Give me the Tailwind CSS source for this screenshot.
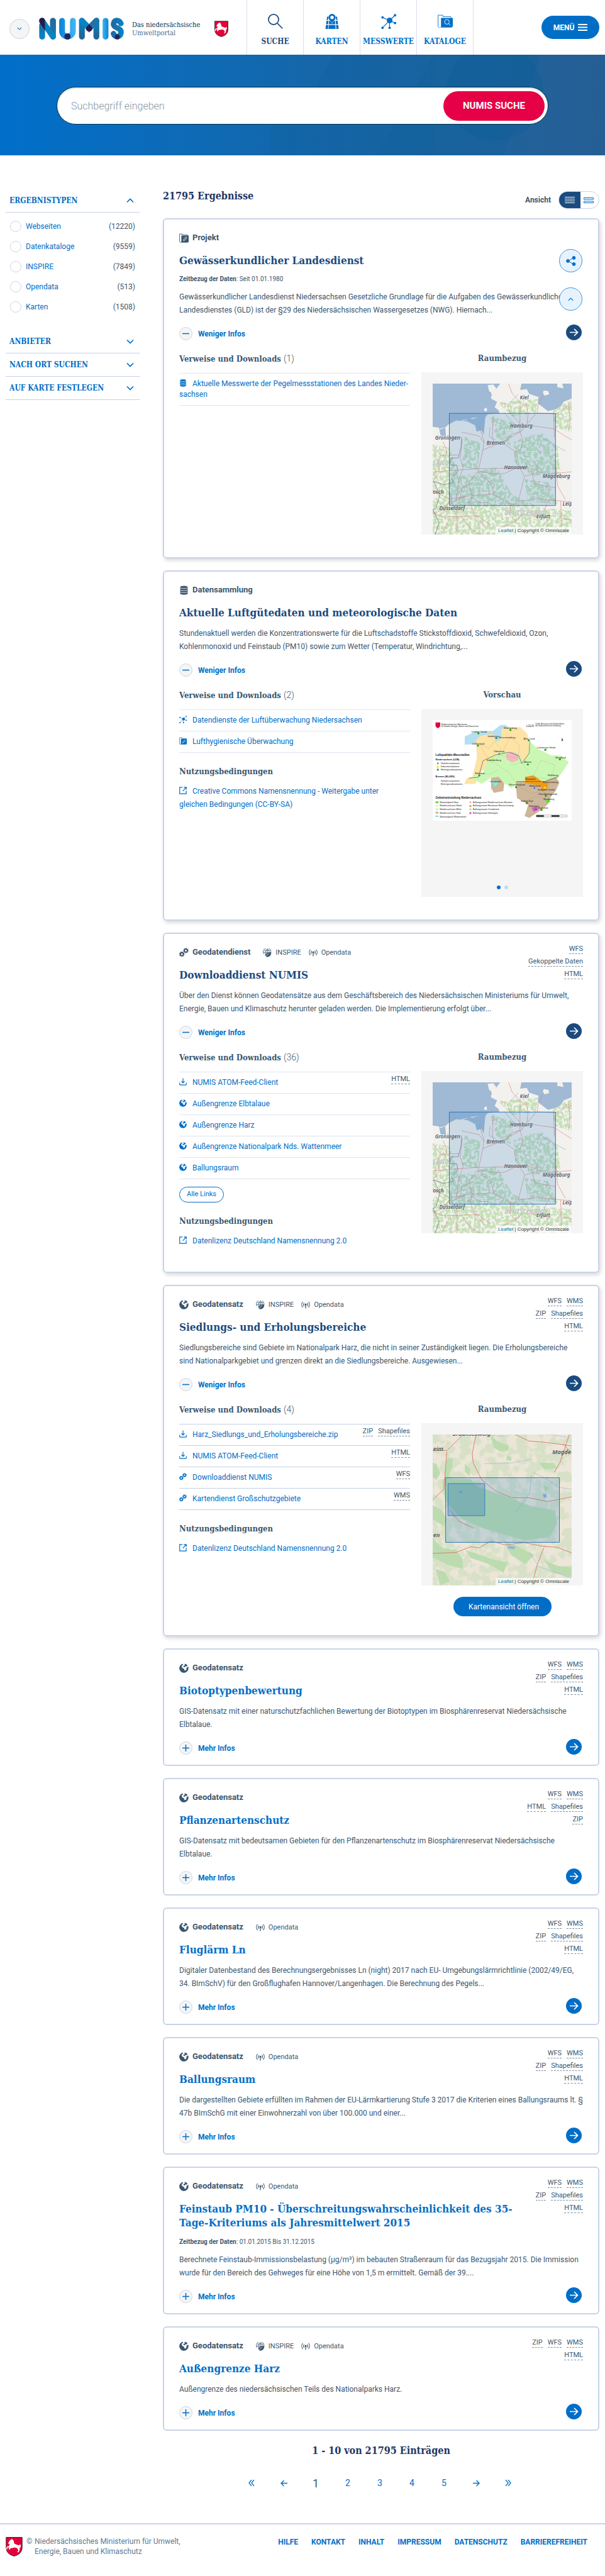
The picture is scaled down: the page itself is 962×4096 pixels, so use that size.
<!DOCTYPE html>
<html lang="de">
<head>
<meta charset="utf-8">
<meta name="viewport" content="width=device-width, initial-scale=1">
<title>NUMIS – Suche</title>
<script src="https://cdn.jsdelivr.net/npm/@tailwindcss/browser@4"></script>
</head>
<body class="bg-white text-[#3b576f] text-[12px] [font-family:Roboto,sans-serif] [&_.slab]:[font-family:'Roboto_Slab','DejaVu_Serif_Condensed','DejaVu_Serif',serif]">

<svg class="absolute size-0" aria-hidden="true">
  <defs>
    <linearGradient id="g2" gradientUnits="userSpaceOnUse" x1="375" y1="0" x2="480" y2="0"><stop offset="0" stop-color="#0584da"/><stop offset="1" stop-color="#45b8f0"/></linearGradient>
    <linearGradient id="g3" gradientUnits="userSpaceOnUse" x1="0" y1="60" x2="0" y2="190"><stop offset="0" stop-color="#0088cc"/><stop offset="1" stop-color="#28608f"/></linearGradient>
    <linearGradient id="g4" gradientUnits="userSpaceOnUse" x1="0" y1="60" x2="0" y2="190"><stop offset="0" stop-color="#28608f"/><stop offset="1" stop-color="#0088cc"/></linearGradient>
    <linearGradient id="g5" gradientUnits="userSpaceOnUse" x1="702" y1="0" x2="786" y2="0"><stop offset="0" stop-color="#28649a"/><stop offset="1" stop-color="#0088cc"/></linearGradient>
    <linearGradient id="g6" gradientUnits="userSpaceOnUse" x1="651" y1="0" x2="688" y2="0"><stop offset="0" stop-color="#3fb4ee"/><stop offset="1" stop-color="#0584da"/></linearGradient>
    <filter id="wood" x="0" y="0" width="1" height="1" color-interpolation-filters="sRGB"><feTurbulence type="fractalNoise" baseFrequency=".05" numOctaves="3" seed="4"/><feColorMatrix result="n" values="0 0 0 0 0  0 0 0 0 0  0 0 0 0 0  9 0 0 0 -3.8"/><feComposite in="SourceGraphic" in2="n" operator="in"/></filter>
  </defs>

  <symbol id="i-crest" viewBox="0 0 30 35">
    <path d="M.7.7h28.6v18C29.300 27 24 32 15 34.300 6 32 .7 27 .7 18.700z" fill="#e4003a" stroke="#1c1118" stroke-width="1"/>
    <path d="M11 3.500l2 1.500 1.500 3 .500 3.500 4 2 4.500 1.500 2.500-2 1 2.500-1 5-1.500-2.500.500 5-2 4.500-2.500-.500 2-3-2-4-5-1.500-3.500 1.500-3-.500-1.500 3-2.500-1 1.500-3-3.500.500-.500 3.500-1.500-.500.500-4.500 4.500-1.500L7 12l-2.500.500.500-3 2.500-3.500z" fill="#fff"/>
  </symbol>
  <symbol id="i-globe" viewBox="0 0 20 20">
    <path fill-rule="evenodd" d="M8 .5A9.700 9.700 0 1 0 18.900 6.500l-1.400 1.300-2.300 1.400.2 3.300-2 2.600-2.400-.3-.6-3.600-2.700-.8-2.600-3 .6-3L8.300 3l-.6-1z" fill="currentColor"/><path d="M11 .5l4 1.200 2.600 2.600-2 2-2.600-.2-1.200 2-2.600-.4-.6-2L12 4z" fill="currentColor"/>
  </symbol>
  <symbol id="i-gears" viewBox="0 0 20 20">
    <g fill="none" stroke="currentColor"><circle cx="5.500" cy="13.500" r="3.200" stroke-width="2.400"/><circle cx="5.500" cy="13.500" r="4.700" stroke-width="1.800" stroke-dasharray="2.100 1.590"/><circle cx="14" cy="6" r="3.200" stroke-width="2.400"/><circle cx="14" cy="6" r="4.700" stroke-width="1.800" stroke-dasharray="2.100 1.590"/></g>
  </symbol>
  <symbol id="i-db" viewBox="0 0 20 20">
    <path d="M2 3.500C2 1.500 5.500.5 10 .5s8 1 8 3v13c0 2-3.500 3-8 3s-8-1-8-3z" fill="currentColor"/><path d="M2 4.500c2 2.200 14 2.200 16 0M2 9c2 2.200 14 2.200 16 0M2 13.500c2 2.200 14 2.200 16 0" fill="none" stroke="#fff" stroke-width="1.100"/>
  </symbol>
  <symbol id="i-folder" viewBox="0 0 20 20">
    <path d="M.8 1.500h6v2h11v2" fill="none" stroke="currentColor" stroke-width="1.200"/><path d="M.8 1.500V17a2 2 0 0 0 2 2" fill="none" stroke="currentColor" stroke-width="1.200"/><path d="M4.500 4.500H20V17a2.500 2.500 0 0 1-2.500 2.500H2.500q2-.3 2-2.500z" fill="currentColor"/><path d="M9 15.500l.6-2.600 4.600-5.200 2 1.800-4.600 5.200z" fill="none" stroke="#fff" stroke-width="1.100"/>
  </symbol>
  <symbol id="i-download" viewBox="0 0 20 20"><path d="M10 1v11.500M5.500 8.500L10 13l4.500-4.500M1.200 12.500v4.700c0 .8.500 1.300 1.300 1.300h15c.8 0 1.300-.5 1.300-1.300v-4.700" fill="none" stroke="currentColor" stroke-width="2"/></symbol>
  <symbol id="i-extern" viewBox="0 0 20 20"><path d="M8.500 1.500H1.200v17h17.300v-8M12 1.300h6.700v6.400M18.500 1.500L9.500 11.500" fill="none" stroke="currentColor" stroke-width="2"/></symbol>
  <symbol id="i-net" viewBox="0 0 32 32"><g fill="currentColor"><circle cx="18" cy="14" r="6"/><circle cx="29.500" cy="3" r="2.600"/><circle cx="3" cy="7.500" r="2.600"/><circle cx="29.500" cy="19.500" r="2.600"/><circle cx="18" cy="29.500" r="2.600"/><circle cx="3" cy="29.500" r="2.600"/></g><path d="M18 14L29.500 3M18 14L3 7.500M18 14l11.500 5.500M18 14v15M18 14L3 29.500" stroke="currentColor" stroke-width="1.500"/></symbol>
  <symbol id="i-open" viewBox="0 0 20 20"><g fill="none" stroke="currentColor" stroke-width="1.600"><path d="M3.500 2.500a10 10 0 0 0 0 13M16.500 2.500a10 10 0 0 1 0 13M6.500 5.500a5.500 5.500 0 0 0 0 7M13.500 5.500a5.500 5.500 0 0 1 0 7"/></g><circle cx="10" cy="9" r="2.100" fill="currentColor"/><path d="M9.100 9h1.800v9H9.100z" fill="currentColor"/></symbol>
  <symbol id="i-inspire" viewBox="0 0 20 20"><g fill="none" stroke="currentColor" stroke-width="1.100"><path d="M2 13A9 9 0 1 1 18.500 8M1 9h17M3 4.500h14M10 1C5 5 5 10 6 14M10 1c3 2 4 4 4.500 7M10 1v10"/></g><path d="M6 13c2-3 7-4 13-4.500C19 15 16 19.500 9 19.500 6.500 19 5 17 6 13z" fill="currentColor"/><path d="M7 18c2-3 4-4.500 7-6" stroke="#fff" stroke-width="1" fill="none"/></symbol>
  <symbol id="i-arrow" viewBox="0 0 25 25"><circle cx="12.500" cy="12.500" r="12.500" fill="currentColor"/><path d="M6 12.500h12M13 7l5.500 5.500L13 18" fill="none" stroke="#fff" stroke-width="1.700"/></symbol>
  <symbol id="i-down" viewBox="0 0 12 8"><path d="M1 1.500l5 5 5-5" fill="none" stroke="currentColor" stroke-width="1.700"/></symbol>

  <symbol id="map-nds" viewBox="15 12 885 960" preserveAspectRatio="none">
    <path d="M0 0h920v1000H0z" fill="#f3f1ed"/>
    <g fill="#c5e0b8" filter="url(#wood)">
      <path d="M15 400l110 20 60 200-50 130L15 700zM120 620L420 540 520 720 700 800 900 820V972H15V760zM530 380l170-60 110 100 20 160-180 20-110-90zM600 620l150 20 60 140-190-20zM380 220l150 40-20 150-90-60zM430 130l260-20-20 90-150 20zM780 170l120-50v200l-110-30zM220 350l100 40-20 170-100-20z"/>
    </g>
    <path d="M15 12h430l-30 40-35-10 10 40 40 15-45 10 40 20-15 35 25 20 5 20-75 5-15 20-10 110-15-30-30 10-10-40-50-25-70-5-50 25-20 20 5 55-35-5-10-50-40-5-70 15z" fill="#a0b9d4"/>
    <path d="M580 12l-8 40 42-5 15 30 60 20-5 40 65 50 55-15 30-20 15-25 51-20V12h-60l8 30-40-8V12z" fill="#a0b9d4"/>
    <g fill="#f3f1ed"><path d="M365 22l35-5 20 25-10 30-35-10zM390 85l35-3 20 15-30 12-30-4zM722 55l30 5 5 20-30 8-10-18zM340 175l18-12 4 22-14 4z"/><path d="M60 298l50-12-50 18zM125 272l60-16-55 20zM200 245l45-8-42 14zM258 232l50-6-45 13z"/></g>
    <g fill="none" stroke="#d98580" stroke-width="2.600">
      <path d="M498 12l22 60 52 60-2 180M450 135l35 5 25 60 60 65M610 135l12 70-6 60-40 55M715 90l-30 70-5 40 125 5 70-55 25 10M620 265l50-60M570 315l20 60-15 55-40 20 10 60 55 90-40 160M575 315l-60 20-45 60 65 45M650 280l140 20 60 40 50 30M575 318l-90 50-85 40-65 25-30 135 110 20 60-5 80-40M400 215l-5 140 15 40-50 10M200 320l110 25 30 40-5 50M310 280l20 60 15 50M205 365l-15 120 20 60-30 80-15 140M15 575l110-10 170-12 340-5 100 40 165-15M300 572l-55 70 20 80-5 40M300 572l85 70 20 80M250 650l-50 30-10 60M130 745l120-20 150-10 100 60 45 5M565 760l110-15 225 20M260 735l60 35 50 0M150 760l70-30M130 760l40 60 0 152M170 820l80-60 30 80 70 90M15 690l110 60-30 60-80 30M510 790l-2 60 60 60M600 845l140 20 10 50-80 57M750 760l-25 60M830 760l5 210M835 870l65 10M650 590l15 60 135 25M680 530v50l-75 20M800 540l10 120 50 90M880 140l10 110-10 60M785 205l5 150M15 830l60 30 230-6 80 60M410 945l120-50 60-50M15 400l50 70 115-5M80 380l25 60-10 40M15 640l40-60V470M130 860l-60 112M200 860l60 80 60 32"/>
    </g>
    <g fill="none" stroke="#96b6da" stroke-width="3"><path d="M470 195l50 60 70 55M690 340l80 50 90 50M380 290l-5 60 40 20M120 690l15 60 30 110M500 140l60-60M780 570l60 50"/></g>
    <g fill="none" stroke="#777a82" stroke-width="3"><path d="M198 350l-2 60-18 75h-50v45h40l8 40-40 40 10 30-60 15-65-20 40 80-25 90-20 10 40 80-25 77"/></g>
    <path d="M121 201h676v586H121z" fill="#3380c8" fill-opacity=".2" stroke="#2a75ba" stroke-width="4"/>
    <g font-family="Noto Sans, sans-serif" font-style="italic" font-weight="600" fill="#525b68" font-size="33" stroke="#ffffff" stroke-opacity=".35" stroke-width="3" paint-order="stroke">
      <text x="570" y="112">Kiel</text><text x="508" y="293">Hamburg</text><text x="30" y="369">Groningen</text><text x="357" y="399">Bremen</text><text x="470" y="558">Hannover</text><text x="715" y="614">Magdeburg</text><text x="16" y="711">osch</text><text x="57" y="816">Düsseldorf</text><text x="842" y="788">Leip</text><text x="675" y="868">Erfurt</text>
      <text x="17" y="532" fill="#bfc1c3" font-size="40">LAND</text><text x="472" y="848" fill="#bfc1c3" font-size="40">DEUTSCHLAND</text>
    </g>
  </symbol>
</svg>

<header class="flex h-[87px] items-stretch">
  <div class="flex w-[392px] shrink-0 items-center pt-1 pl-[15px]">
    <button aria-label="Portale anzeigen" class="flex size-8 items-center justify-center rounded-full border border-[#c9d2e6] bg-[#f5f5f5] text-[#006ec7]"><svg class="h-[5px] w-2"><use href="#i-down"/></svg></button>
    <a href="#" aria-label="NUMIS Startseite" class="ml-[15px]">
      <svg class="h-[35px] w-[135px]" viewBox="246 52 540 140" fill="none" stroke-width="37" stroke-linecap="round">
        <path d="M335 72v101" stroke="url(#g4)"/><path d="M266 72l69 101" stroke="#0b83c2"/><path d="M266 100v73" stroke="url(#g4)"/>
        <path d="M247 72a19 19 0 0 1 36-8l2 70-36-52z" fill="#261b4d"/><path d="M335 72v50" stroke="#2272a8" stroke-opacity=".6"/>
        <path d="M393 72v66a34 34 0 0 0 69 0V72" stroke="url(#g2)"/><circle cx="427" cy="172" r="20" fill="#27235a"/>
        <path d="M519 72v101M611 72v101" stroke="url(#g3)"/><path d="M519 72l46 48 46-48" stroke="#0b83c2"/><path d="M611 72l-46 48" stroke="#2272a8"/>
        <path d="M565 94c12 12 20 18 20 28a20 18 0 0 1-40 0c0-10 8-16 20-28z" fill="#261b4d"/>
        <path d="M669 72v101" stroke="url(#g6)"/>
        <path d="M767 89C757 64 720 64 720 94c0 28 48 18 48 50 0 36-42 36-48 10" stroke="url(#g5)" stroke-width="35"/><circle cx="744" cy="175" r="16" fill="#27235a"/>
      </svg>
    </a>
    <p class="slab ml-[13px] w-[118px] text-[11px] leading-[13px] whitespace-nowrap text-[#003756]">Das niedersächsische<br><span class="text-[#4a6f8b]">Umweltportal</span></p>
    <svg class="ml-[13px] h-[26px] w-[22px]"><use href="#i-crest"/></svg>
  </div>
  <nav aria-label="Hauptnavigation" class="slab flex border-r border-[#d8deeb] text-[12px] leading-4 font-bold text-[#006ec7]">
    <a href="#" class="flex w-[90px] flex-col items-center border-l border-[#d8deeb] pt-[22px] text-[#1b4b7e]"><svg class="mb-3 size-6" viewBox="0 0 32 32" fill="none" stroke="currentColor" stroke-width="2.300"><circle cx="12" cy="12" r="10.800"/><path d="M20 20l11 11"/></svg>SUCHE</a>
    <a href="#" class="flex w-[90px] flex-col items-center border-l border-[#d8deeb] pt-[22px]"><svg class="mb-3 size-6" viewBox="0 0 32 32" fill="currentColor"><path d="M5.500 6h3l-1 7H4.500zM23.500 6h3l1 7h-2.700zM4.300 14.500h4.200l-.8 7.500H3.300zM10 14.500h1.500l4.500 6 4.500-6H22l.8 7.500H9.200zM23.500 14.500h4.200l1 7.500h-4.400zM3 23.500h5l-.5 8.500H2zM9 23.500h14l.5 8.500h-15zM24.500 23.500h4.600l.9 8.500h-5z"/><path fill-rule="evenodd" d="M16 0a7.500 7.500 0 0 1 7.500 7.500C23.500 12 18 16 16 20 14 16 8.500 12 8.500 7.500A7.500 7.500 0 0 1 16 0zm0 4a3.600 3.600 0 1 0 0 7.200A3.600 3.600 0 0 0 16 4z"/></svg>KARTEN</a>
    <a href="#" class="flex w-[90px] flex-col items-center border-l border-[#d8deeb] pt-[22px]"><svg class="mb-3 size-6"><use href="#i-net"/></svg>MESSWERTE</a>
    <a href="#" class="flex w-[90px] flex-col items-center border-l border-[#d8deeb] pt-[22px]"><svg class="mb-3 size-6" viewBox="0 0 32 32" fill="none" stroke="currentColor" stroke-width="1.200"><path d="M.8 26V2.800h10v3h17V8M.8 26c0 2 1 3 3 3"/><path d="M7 8.500h25V25c0 3-2 4-4 4H4c2 0 3-1 3-3z" fill="currentColor" stroke="none"/><circle cx="19.500" cy="17" r="5" stroke="#fff"/><path d="M23 20.500l4 4" stroke="#fff"/></svg>KATALOGE</a>
  </nav>
  <div class="flex flex-1 items-center justify-end pr-[9px]">
    <button class="flex h-[37px] w-[92px] items-center justify-center gap-[6px] rounded-full bg-[#006ec7] text-[12px] font-bold text-white">MENÜ<svg class="h-[11px] w-[15px]" viewBox="0 0 15 11" stroke="#fff" stroke-width="2"><path d="M0 1h15M0 5.500h15M0 10h15"/></svg></button>
  </div>
</header>

<section class="relative h-[160px] bg-linear-to-r from-[#006fca] via-[#1268ad] via-45% to-[#255f94] px-[90px] pt-[51px]">
  <svg class="absolute inset-0 size-full" viewBox="0 0 962 160" preserveAspectRatio="none" fill="#0c5f99"><path d="M530 0h160v160H430c-10-50 10-70 50-70z" opacity=".22"/><path d="M690 0h170L800 160H600z" opacity=".3"/><circle cx="787" cy="60" r="77" opacity=".35"/></svg>
  <form class="relative flex h-[60px] items-center rounded-[30px] border border-[#053248] bg-white pr-[5px] pl-[22px] shadow-[inset_0_2px_2px_rgba(0,0,0,.12)]">
    <input type="text" aria-label="Suchbegriff" placeholder="Suchbegriff eingeben" class="h-full min-w-0 flex-1 bg-transparent text-[16px] font-light outline-none placeholder:text-[#8596a5]">
    <button type="button" class="h-[47px] w-[161px] rounded-full bg-[#e60046] text-[15px] font-bold text-white">NUMIS SUCHE</button>
  </form>
</section>

<div class="flex pr-[9px] pl-[9px]">
  <aside class="mr-[37px] w-[213px] shrink-0 pt-[54px]">
    <button class="slab flex h-[37px] w-full items-center justify-between border-b border-[#c5d0e6] pr-[9px] pl-[6px] text-[12px] font-bold text-[#006ec7]">ERGEBNISTYPEN<svg class="h-2 w-3 rotate-180"><use href="#i-down"/></svg></button>
    <ul class="flex flex-col pt-[6px] pr-[7px] pb-[17px] pl-[7px] text-[12px]">
      <li class="flex h-8 items-center"><input id="t1" type="checkbox" class="size-[18px] appearance-none rounded-full border border-[#cdd5e8]"><label for="t1" class="ml-[7px] flex-1 text-[#006ec7]">Webseiten</label><span>(12220)</span></li>
      <li class="flex h-8 items-center"><input id="t2" type="checkbox" class="size-[18px] appearance-none rounded-full border border-[#cdd5e8]"><label for="t2" class="ml-[7px] flex-1 text-[#006ec7]">Datenkataloge</label><span>(9559)</span></li>
      <li class="flex h-8 items-center"><input id="t3" type="checkbox" class="size-[18px] appearance-none rounded-full border border-[#cdd5e8]"><label for="t3" class="ml-[7px] flex-1 text-[#006ec7]">INSPIRE</label><span>(7849)</span></li>
      <li class="flex h-8 items-center"><input id="t4" type="checkbox" class="size-[18px] appearance-none rounded-full border border-[#cdd5e8]"><label for="t4" class="ml-[7px] flex-1 text-[#006ec7]">Opendata</label><span>(513)</span></li>
      <li class="flex h-8 items-center"><input id="t5" type="checkbox" class="size-[18px] appearance-none rounded-full border border-[#cdd5e8]"><label for="t5" class="ml-[7px] flex-1 text-[#006ec7]">Karten</label><span>(1508)</span></li>
    </ul>
    <button class="slab mt-1 flex h-[37px] w-full items-center justify-between border-b border-[#c5d0e6] pr-[9px] pl-[6px] text-[12px] font-bold text-[#006ec7]">ANBIETER<svg class="h-2 w-3"><use href="#i-down"/></svg></button>
    <button class="slab flex h-[37px] w-full items-center justify-between border-b border-[#c5d0e6] pr-[9px] pl-[6px] text-[12px] font-bold text-[#006ec7]">NACH ORT SUCHEN<svg class="h-2 w-3"><use href="#i-down"/></svg></button>
    <button class="slab flex h-[37px] w-full items-center justify-between border-b border-[#c5d0e6] pr-[9px] pl-[6px] text-[12px] font-bold text-[#006ec7]">AUF KARTE FESTLEGEN<svg class="h-2 w-3"><use href="#i-down"/></svg></button>
  </aside>

  <main class="min-w-0 flex-1">
    <div class="flex h-[100px] items-start justify-between pt-[53px]">
      <h1 class="slab text-[16px] leading-6 font-bold text-[#1f3666]">21795 Ergebnisse</h1>
      <div class="mt-1 flex items-center gap-3"><span class="text-[12px] font-bold">Ansicht</span>
        <div class="flex h-[28px] w-[65px] overflow-hidden rounded-full border border-[#c9d2e6]">
          <button aria-label="Listenansicht" class="flex w-[34px] items-center justify-center bg-[#1b4b7e]"><svg class="h-[10px] w-4" viewBox="0 0 16 10" stroke="#fff"><path d="M0 .5h16M0 3.500h16M0 6.500h16M0 9.500h16"/></svg></button>
          <button aria-label="Kachelansicht" class="flex flex-1 items-center justify-center pr-1"><svg class="h-[9px] w-4" viewBox="0 0 16 9" fill="none" stroke="#006ec7"><path d="M.5.5h15v2.500H.5zM.5 6h15v2.500H.5z"/></svg></button>
        </div>
      </div>
    </div>

    <div class="flex flex-col gap-[19px]">

      <article class="relative rounded-md border-2 border-[#c9d3e8] px-6 pt-[18px] pb-4 shadow-[2px_3px_6px_rgba(0,0,0,.16)]">
        <p class="flex h-[22px] items-center gap-[6px] text-[13px] font-bold"><svg class="size-[15px]"><use href="#i-folder"/></svg>Projekt</p>
        <h2 class="slab mt-[14px] text-[17px] leading-[22px] font-bold text-[#1b4b7e]"><a href="#">Gewässerkundlicher Landesdienst</a></h2>
        <p class="mt-[11px] text-[10px] leading-4"><b>Zeitbezug der Daten</b>: Seit 01.01.1980</p>
        <p class="mt-[10px] leading-[21px]">Gewässerkundlicher Landesdienst Niedersachsen Gesetzliche Grundlage für die Aufgaben des Gewässerkundlichen Landesdienstes (GLD) ist der §29 des Niedersächsischen Wassergesetzes (NWG). Hiernach...</p>
        <div class="mt-3 flex h-[25px] items-end justify-between pr-[2px]"><button class="flex items-center gap-[9px] font-bold text-[#006ec7]"><svg class="size-[21px]" viewBox="0 0 21 21"><circle cx="10.500" cy="10.500" r="10" fill="#f5f5f5" stroke="#c9d2e6"/><path d="M5 10.500h11" stroke="#006ec7" stroke-width="1.500"/></svg>Weniger Infos</button><a href="#" aria-label="Details" class="text-[#1b4b7e]"><svg class="size-[25px]"><use href="#i-arrow"/></svg></a></div>
        <div class="mt-[19px] flex gap-[18px] pb-[20px]">
          <div class="min-w-0 flex-1">
            <h3 class="slab mb-3 text-[13px] leading-5 font-bold">Verweise und Downloads <span class="text-[14px] font-light [font-family:Roboto,sans-serif]">(1)</span></h3>
            <ul class="border-t border-[#dfe4f0] text-[#006ec7] leading-[17px]">
              <li class="border-b border-[#dfe4f0] py-2"><a href="#"><svg class="mr-[9px] -mt-1 inline size-[12px]"><use href="#i-db"/></svg>Aktuelle Messwerte der Pegelmessstationen des Landes Nieder&shy;sachsen</a></li>
            </ul>
          </div>
          <div class="w-[257px] shrink-0 text-center">
            <h3 class="slab mb-3 text-[13px] leading-5 font-bold">Raumbezug</h3>
            <div class="bg-[#f5f5f5] px-[18px] pt-[18px]"><div class="relative h-[240px]"><svg class="size-full"><use href="#map-nds"/></svg><p class="absolute right-0 bottom-0 bg-white/70 px-1 text-[8px] leading-3 text-[#333] [font-family:'Liberation_Sans',sans-serif]"><a href="#" class="text-[#0078a8]">Leaflet</a> | Copyright © Omniscale</p></div></div>
          </div>
        </div>
        <button aria-label="Teilen" class="absolute top-[47px] right-[25px] flex size-[37px] items-center justify-center rounded-full border border-[#3f93d8] bg-[#e6f3ff]"><svg class="size-4" viewBox="0 0 16 16" fill="#006ec7" stroke="#006ec7"><path d="M3 8l9-5M3 8l9 5"/><circle cx="3" cy="8" r="2.400"/><circle cx="12.500" cy="3" r="2.400"/><circle cx="12.500" cy="13" r="2.400"/></svg></button>
        <button aria-label="Nach oben" class="absolute top-[108px] right-[25px] flex size-[37px] items-center justify-center rounded-full border border-[#3f93d8] bg-[#e6f3ff] text-[#006ec7]"><svg class="h-[6px] w-[9px] rotate-180"><use href="#i-down"/></svg></button>
      </article>

      <article class="rounded-md border-2 border-[#c9d3e8] px-6 pt-[18px] pb-4 shadow-[2px_3px_6px_rgba(0,0,0,.16)]">
        <p class="flex h-[22px] items-center gap-[6px] text-[13px] font-bold"><svg class="size-[15px]"><use href="#i-db"/></svg>Datensammlung</p>
        <h2 class="slab mt-[14px] text-[17px] leading-[22px] font-bold text-[#1b4b7e]"><a href="#">Aktuelle Luftgütedaten und meteorologische Daten</a></h2>
        <p class="mt-3 leading-[21px]">Stundenaktuell werden die Konzentrationswerte für die Luftschadstoffe Stickstoffdioxid, Schwefeldioxid, Ozon, Kohlenmonoxid und Feinstaub (PM10) sowie zum Wetter (Temperatur, Windrichtung,...</p>
        <div class="mt-3 flex h-[25px] items-end justify-between pr-[2px]"><button class="flex items-center gap-[9px] font-bold text-[#006ec7]"><svg class="size-[21px]" viewBox="0 0 21 21"><circle cx="10.500" cy="10.500" r="10" fill="#f5f5f5" stroke="#c9d2e6"/><path d="M5 10.500h11" stroke="#006ec7" stroke-width="1.500"/></svg>Weniger Infos</button><a href="#" aria-label="Details" class="text-[#1b4b7e]"><svg class="size-[25px]"><use href="#i-arrow"/></svg></a></div>
        <div class="mt-[19px] flex gap-[18px] pb-[20px]">
          <div class="min-w-0 flex-1">
            <h3 class="slab mb-3 text-[13px] leading-5 font-bold">Verweise und Downloads <span class="text-[14px] font-light [font-family:Roboto,sans-serif]">(2)</span></h3>
            <ul class="border-t border-[#dfe4f0] text-[#006ec7] leading-[17px]">
              <li class="border-b border-[#dfe4f0] py-2"><a href="#"><svg class="mr-[9px] -mt-1 inline size-[12px]"><use href="#i-net"/></svg>Datendienste der Luftüberwachung Niedersachsen</a></li>
              <li class="border-b border-[#dfe4f0] py-2"><a href="#"><svg class="mr-[9px] -mt-1 inline size-[12px]"><use href="#i-folder"/></svg>Lufthygienische Überwachung</a></li>
            </ul>
            <h3 class="slab mt-5 mb-[11px] text-[13px] leading-5 font-bold">Nutzungsbedingungen</h3>
            <p class="leading-[21px] text-[#006ec7]"><a href="#"><svg class="mr-[9px] -mt-1 inline size-[12px]"><use href="#i-extern"/></svg>Creative Commons Namensnennung - Weitergabe unter<br>gleichen Bedingungen (CC-BY-SA)</a></p>
          </div>
          <div class="w-[257px] shrink-0 text-center">
            <h3 class="slab mb-3 text-[13px] leading-5 font-bold">Vorschau</h3>
            <div class="flex h-[299px] flex-col justify-between bg-[#f5f5f5] px-[18px] pt-[18px] pb-3">
              <svg class="h-[160px] w-full" viewBox="0 0 295 213" preserveAspectRatio="none" font-family="Liberation Sans, sans-serif" font-size="5">
                <path d="M0 0h295v213H0z" fill="#fff"/>
                <path d="M68 35l25-12 35 0 15-12 10-1 10 5-8 30-40 5-47 2z" fill="#b5dff0"/>
                <path d="M92 42l10-9 26-4 6 18 12-8 0-20 10-4 30 0 15 14 4 25 0 30-16 18-2 10-14-3-8-16-28 0-28 12-10 8-8 22-24 0 5-12 12-3 10-40z" fill="#fde3a4"/>
                <path d="M206 45l16 15 30 15 20 0 17 14-20 30-16 14-5 10-50 0-20-12-10 14-24-18-22-4-18 12-18-10 0-8 20-4 14-35 26-10 34 0 10 16 12-4z" fill="#cbf7b4"/>
                <path d="M124 122l16-2 12 14-2 16-20 4-6-10zM176 130h60l25-10 8 12-8 18-10 12-6 15-10 10-30 20-10-4 8-24-24-14z" fill="#cdb699"/>
                <path d="M156 72l12-5 14 6 0 12-14 5-12-8z" fill="#f5b9bd"/><path d="M196 120l18-3 14 10 6 4 12 2-4 14-12 2 2-10-24-4-12-2z" fill="#f09a12"/><path d="M126 130l8-3 5 6-7 9z" fill="#7deed8"/><path d="M210 185l12-2 2 7-10 4z" fill="#e052d0"/><path d="M240 170l6-4 4 6-6 4z" fill="#62dc2a"/>
                <g stroke="#8a8f80" stroke-width=".4" fill="none" opacity=".7"><path d="M100 50l20 10 10-15 20 20 15-30 20 20-5 25-35-5-20 15-15-20zM130 90l30 20 20 25 30-10 20-40 30 10-10 30-40-5-20-30-25 5M180 140l30 15 30-5 10-15M200 170l20-10 20 10M90 110l30 5 20-10"/></g>
                <path d="M206 45l-1 25-16 22-6-16-20-8-30 6-26 12-10 35-20 2M178 130h60l28-10" fill="none" stroke="#444" stroke-width=".8"/>
                <g fill="#2f9a10"><circle cx="97" cy="28" r="2.200"/><circle cx="165" cy="21" r="2.200"/><circle cx="135" cy="38" r="2.200"/><circle cx="96" cy="54" r="2.200"/><circle cx="204" cy="43" r="2.200"/><circle cx="239" cy="63" r="2.200"/><circle cx="270" cy="83" r="2.200"/><circle cx="202" cy="94" r="2.200"/><circle cx="99" cy="117" r="2.200"/><circle cx="177" cy="142" r="2.200"/><circle cx="240" cy="160" r="2.200"/><circle cx="231" cy="190" r="2.200"/><circle cx="200" cy="176" r="2.200"/><circle cx="11" cy="105" r="2.200"/></g>
                <path d="M9 93l2-4 2 4zM139 73l2-4 2 4zM214 145l2-4 2 4zM217 190l2-4 2 4z" fill="#2c59c8"/><path d="M9 97h4v4H9zM126 80h3v3h-3zM236 141h4v4h-4z" fill="#f5e511"/>
                <path d="M6 5h10v6q0 4-5 6-5-2-5-6z" fill="#e4003a"/>
                <g fill="#111"><text x="18" y="10" font-size="4">Niedersächsisches Ministerium</text><text x="18" y="14" font-size="4">für Umwelt, Energie, Bauen und Klimaschutz</text><text x="199" y="14" font-size="6">LGLN</text><text x="218" y="9" font-size="3.500">Quelle: Auszug aus den Geobasisdaten</text><text x="218" y="13" font-size="3.500">der Niedersächsischen Verwaltung</text>
                <text x="82" y="26">Ostfries. Inseln</text><text x="151" y="19">Elbmündung</text><text x="116" y="36">Jadebusen</text><text x="140" y="38">Wesermündung</text><text x="193" y="41">Altes Land</text><text x="83" y="52">Ostfriesland</text><text x="221" y="60">Lüneburger Heide</text><text x="129" y="68">Oldenburg</text><text x="260" y="81">Wendland</text><text x="114" y="87">Südoldenburg</text><text x="194" y="91">Allertal</text><text x="90" y="115">Emsland</text><text x="244" y="119">Wolfsburg</text><text x="121" y="132">Osnabrück</text><text x="197" y="126">Hannover</text><text x="234" y="133">Braunschweig</text><text x="162" y="139">Weserbergland</text><text x="205" y="141">Hildesheim</text><text x="223" y="149">Salzgitter-Drütte</text><text x="224" y="159">Oker/Harlingerode</text><text x="235" y="169">Wurmberg</text><text x="187" y="173">Solling-Süd</text><text x="204" y="184">Göttingen</text><text x="224" y="188">Eichsfeld</text>
                <text x="17" y="93">Verkehrsstationen</text><text x="17" y="100">Industriestationen</text><text x="17" y="107">Hintergrundstationen</text><text x="17" y="130">Verkehrsstationen</text><text x="17" y="137">Hintergrundstationen</text>
                <text x="15" y="176">Nationalpark Harz</text><text x="15" y="183">Niedersachsen-Nord</text><text x="15" y="191">Niedersachsen-Mitte</text><text x="15" y="198">Niedersachsen-Süd</text><text x="15" y="206">Nationalpark Wattenmeer</text><text x="85" y="176">Ballungsraum Niedersachsen-Bremen</text><text x="85" y="183">Ballungsraum Hannover-Braunschweig</text><text x="85" y="191">Ballungsraum Osnabrück</text><text x="85" y="198">Ballungsraum Göttingen</text>
                <g font-weight="bold"><text x="6" y="76" font-size="6">Luftqualitäts-Messstellen</text><text x="6" y="85">Niedersachsen (LÜN)</text><text x="6" y="121">Bremen (BLUES)</text><text x="6" y="167" font-size="6">Gebietseinstufung Niedersachsen</text></g></g>
                <path d="M6 172h6v4H6z" fill="#62dc2a"/><path d="M6 180h6v3H6z" fill="#fde3a4"/><path d="M6 187h6v4H6z" fill="#cbf7b4"/><path d="M6 194h6v4H6z" fill="#cdb699"/><path d="M6 202h6v3H6z" fill="#8fd5ea"/><path d="M78 172h4v4h-4z" fill="#f5b9bd"/><path d="M78 180h4v4h-4z" fill="#f09a12"/><path d="M78 187h4v4h-4z" fill="#7deed8"/><path d="M78 195h4v4h-4z" fill="#e052d0"/>
                <path d="M273 45l2-8 2 8-2-2z" fill="#333"/><path d="M220 201h65v4h-65z" fill="#fff" stroke="#555" stroke-width=".6"/><path d="M220 201h16v4h-16zM252 201h17v4h-17z" fill="#444"/>
              </svg>
              <div class="flex justify-center gap-[6px]"><span class="size-[6px] rounded-full bg-[#006ec7]"></span><span class="size-[6px] rounded-full bg-[#c3d9ee]"></span></div>
            </div>
          </div>
        </div>
      </article>

      <article class="rounded-md border-2 border-[#c9d3e8] px-6 pt-[18px] pb-4 shadow-[2px_3px_6px_rgba(0,0,0,.16)]">
        <div class="flex justify-between">
          <div class="min-w-0 flex-1">
            <p class="flex h-[22px] items-center text-[13px] font-bold"><svg class="mr-[6px] size-[15px]"><use href="#i-gears"/></svg>Geodatendienst<span class="ml-5 flex items-center gap-[6px] pt-[2px] text-[11px] font-normal"><svg class="size-[14px]"><use href="#i-inspire"/></svg>INSPIRE<svg class="ml-[6px] size-[14px]"><use href="#i-open"/></svg>Opendata</span></p>
            <h2 class="slab mt-[14px] text-[17px] leading-[22px] font-bold text-[#1b4b7e]"><a href="#">Downloaddienst NUMIS</a></h2>
          </div>
          <div class="-mt-1 -mb-1 w-[100px] shrink-0 text-[11px] leading-[14px] [&>div]:flex [&>div]:h-5 [&>div]:items-center [&>div]:justify-end [&>div]:gap-2 [&_span]:border-b [&_span]:border-dashed [&_span]:border-[#7d8fa0]"><div><span>WFS</span></div><div><span>Gekoppelte Daten</span></div><div><span>HTML</span></div></div>
        </div>
        <p class="mt-3 leading-[21px]">Über den Dienst können Geodatensätze aus dem Geschäftsbereich des Niedersächsischen Ministeriums für Umwelt, Energie, Bauen und Klimaschutz herunter geladen werden. Die Implementierung erfolgt über...</p>
        <div class="mt-3 flex h-[25px] items-end justify-between pr-[2px]"><button class="flex items-center gap-[9px] font-bold text-[#006ec7]"><svg class="size-[21px]" viewBox="0 0 21 21"><circle cx="10.500" cy="10.500" r="10" fill="#f5f5f5" stroke="#c9d2e6"/><path d="M5 10.500h11" stroke="#006ec7" stroke-width="1.500"/></svg>Weniger Infos</button><a href="#" aria-label="Details" class="text-[#1b4b7e]"><svg class="size-[25px]"><use href="#i-arrow"/></svg></a></div>
        <div class="mt-[19px] flex gap-[18px] pb-[22px]">
          <div class="min-w-0 flex-1">
            <h3 class="slab mb-3 text-[13px] leading-5 font-bold">Verweise und Downloads <span class="text-[14px] font-light [font-family:Roboto,sans-serif]">(36)</span></h3>
            <ul class="border-t border-[#dfe4f0] leading-[17px] [&_a]:text-[#006ec7]">
              <li class="flex justify-between border-b border-[#dfe4f0] py-2"><a href="#"><svg class="mr-[9px] -mt-1 inline size-[12px]"><use href="#i-download"/></svg>NUMIS ATOM-Feed-Client</a><span class="-mt-1 mb-[6px] border-b border-dashed border-[#7d8fa0] text-[11px] leading-[14px]">HTML</span></li>
              <li class="border-b border-[#dfe4f0] py-2"><a href="#"><svg class="mr-[9px] -mt-1 inline size-[12px]"><use href="#i-globe"/></svg>Außengrenze Elbtalaue</a></li>
              <li class="border-b border-[#dfe4f0] py-2"><a href="#"><svg class="mr-[9px] -mt-1 inline size-[12px]"><use href="#i-globe"/></svg>Außengrenze Harz</a></li>
              <li class="border-b border-[#dfe4f0] py-2"><a href="#"><svg class="mr-[9px] -mt-1 inline size-[12px]"><use href="#i-globe"/></svg>Außengrenze Nationalpark Nds. Wattenmeer</a></li>
              <li class="border-b border-[#dfe4f0] py-2"><a href="#"><svg class="mr-[9px] -mt-1 inline size-[12px]"><use href="#i-globe"/></svg>Ballungsraum</a></li>
            </ul>
            <button class="mt-3 block h-[25px] w-[71px] rounded-full border border-[#006ec7] text-[11px] text-[#006ec7]">Alle Links</button>
            <h3 class="slab mt-5 mb-[11px] text-[13px] leading-5 font-bold">Nutzungsbedingungen</h3>
            <p class="leading-[21px] text-[#006ec7]"><a href="#"><svg class="mr-[9px] -mt-1 inline size-[12px]"><use href="#i-extern"/></svg>Datenlizenz Deutschland Namensnennung 2.0</a></p>
          </div>
          <div class="w-[257px] shrink-0 text-center">
            <h3 class="slab mb-3 text-[13px] leading-5 font-bold">Raumbezug</h3>
            <div class="bg-[#f5f5f5] px-[18px] pt-[18px]"><div class="relative h-[240px]"><svg class="size-full"><use href="#map-nds"/></svg><p class="absolute right-0 bottom-0 bg-white/70 px-1 text-[8px] leading-3 text-[#333] [font-family:'Liberation_Sans',sans-serif]"><a href="#" class="text-[#0078a8]">Leaflet</a> | Copyright © Omniscale</p></div></div>
          </div>
        </div>
      </article>

      <article class="rounded-md border-2 border-[#c9d3e8] px-6 pt-[18px] pb-4 shadow-[2px_3px_6px_rgba(0,0,0,.16)]">
        <div class="flex justify-between">
          <div class="min-w-0 flex-1">
            <p class="flex h-[22px] items-center text-[13px] font-bold"><svg class="mr-[6px] size-[15px]"><use href="#i-globe"/></svg>Geodatensatz<span class="ml-5 flex items-center gap-[6px] pt-[2px] text-[11px] font-normal"><svg class="size-[14px]"><use href="#i-inspire"/></svg>INSPIRE<svg class="ml-[6px] size-[14px]"><use href="#i-open"/></svg>Opendata</span></p>
            <h2 class="slab mt-[14px] text-[17px] leading-[22px] font-bold text-[#1b4b7e]"><a href="#">Siedlungs- und Erholungsbereiche</a></h2>
          </div>
          <div class="-mt-1 -mb-1 w-[100px] shrink-0 text-[11px] leading-[14px] [&>div]:flex [&>div]:h-5 [&>div]:items-center [&>div]:justify-end [&>div]:gap-2 [&_span]:border-b [&_span]:border-dashed [&_span]:border-[#7d8fa0]"><div><span>WFS</span><span>WMS</span></div><div><span>ZIP</span><span>Shapefiles</span></div><div><span>HTML</span></div></div>
        </div>
        <p class="mt-3 leading-[21px]">Siedlungsbereiche sind Gebiete im Nationalpark Harz, die nicht in seiner Zuständigkeit liegen. Die Erholungsbereiche sind Nationalparkgebiet und grenzen direkt an die Siedlungsbereiche. Ausgewiesen...</p>
        <div class="mt-3 flex h-[25px] items-end justify-between pr-[2px]"><button class="flex items-center gap-[9px] font-bold text-[#006ec7]"><svg class="size-[21px]" viewBox="0 0 21 21"><circle cx="10.500" cy="10.500" r="10" fill="#f5f5f5" stroke="#c9d2e6"/><path d="M5 10.500h11" stroke="#006ec7" stroke-width="1.500"/></svg>Weniger Infos</button><a href="#" aria-label="Details" class="text-[#1b4b7e]"><svg class="size-[25px]"><use href="#i-arrow"/></svg></a></div>
        <div class="mt-[19px] flex gap-[18px] pb-[14px]">
          <div class="min-w-0 flex-1">
            <h3 class="slab mb-3 text-[13px] leading-5 font-bold">Verweise und Downloads <span class="text-[14px] font-light [font-family:Roboto,sans-serif]">(4)</span></h3>
            <ul class="border-t border-[#c5d0e6] leading-[17px] [&_a]:text-[#006ec7]">
              <li class="flex border-b border-[#c5d0e6] py-2"><a href="#" class="flex-1"><svg class="mr-[9px] -mt-1 inline size-[12px]"><use href="#i-download"/></svg>Harz_Siedlungs_und_Erholungsbereiche.zip</a><span class="-mt-1 mb-[6px] border-b border-dashed border-[#7d8fa0] text-[11px] leading-[14px]">ZIP</span><span class="-mt-1 mb-[6px] ml-2 border-b border-dashed border-[#7d8fa0] text-[11px] leading-[14px]">Shapefiles</span></li>
              <li class="flex justify-between border-b border-[#c5d0e6] py-2"><a href="#"><svg class="mr-[9px] -mt-1 inline size-[12px]"><use href="#i-download"/></svg>NUMIS ATOM-Feed-Client</a><span class="-mt-1 mb-[6px] border-b border-dashed border-[#7d8fa0] text-[11px] leading-[14px]">HTML</span></li>
              <li class="flex justify-between border-b border-[#c5d0e6] py-2"><a href="#"><svg class="mr-[9px] -mt-1 inline size-[12px]"><use href="#i-gears"/></svg>Downloaddienst NUMIS</a><span class="-mt-1 mb-[6px] border-b border-dashed border-[#7d8fa0] text-[11px] leading-[14px]">WFS</span></li>
              <li class="flex justify-between border-b border-[#c5d0e6] py-2"><a href="#"><svg class="mr-[9px] -mt-1 inline size-[12px]"><use href="#i-gears"/></svg>Kartendienst Großschutzgebiete</a><span class="-mt-1 mb-[6px] border-b border-dashed border-[#7d8fa0] text-[11px] leading-[14px]">WMS</span></li>
            </ul>
            <h3 class="slab mt-5 mb-[11px] text-[13px] leading-5 font-bold">Nutzungsbedingungen</h3>
            <p class="leading-[21px] text-[#006ec7]"><a href="#"><svg class="mr-[9px] -mt-1 inline size-[12px]"><use href="#i-extern"/></svg>Datenlizenz Deutschland Namensnennung 2.0</a></p>
          </div>
          <div class="w-[257px] shrink-0 text-center">
            <h3 class="slab mb-3 text-[13px] leading-5 font-bold">Raumbezug</h3>
            <div class="bg-[#f5f5f5] px-[18px] pt-[18px]"><div class="relative h-[240px]">
              <svg class="size-full" viewBox="0 0 295 320" preserveAspectRatio="none">
                <path d="M0 0h295v320H0z" fill="#ece6d8"/>
                <g fill="#bcdcb0"><path d="M122 2l16 12 24 10-2 10-16 2-14-8zM30 50l12 0 0 20-8 18 12 10-10 10-12-14 4-20zM0 60l8 2 8 20-8 14-8-6zM68 62l12 10-2 16-10-10zM158 44l10 4-2 8-10-2zM20 95l60 0 16 16 60 20 50 20 54 10 4 30-16 26-50 8-50-14-40-12-46-20-36-40zM0 150l20 10 10 20-6 14-24-14zM0 220l20 20 30 5 14 20 0 20-30-8-34-16zM70 245l60 20 30 6-10 22-30-18-40-14zM150 225l26 10 40 20-20 20-30-20zM235 265l30 14 30 2v20l-40-8zM6 285l20 6 10 20-20 9zM225 60l30 0 10 12-28 2zM235 108l12 4-8 10z"/></g>
                <path d="M0 0h295v320H0z" fill="#bcdcb0" filter="url(#wood)" opacity=".4"/>
                <g fill="none" stroke="#d9746c" stroke-width="1.200"><path d="M92 0l-8 40 2 20 18 36 30 24 34 14 36 0 40 8 51-10M65 0l-35 34-6 0-24 0M30 36l-6 80-24 22M175 0l30 14 30 2 60 8M290 0l-20 60-12 20M278 20l17 20M0 252l50-2 30-12 18 2 26-14 30 8 40-5 40 8 30 2 31 12M236 240l-14 36-12 44M36 160l20 24 30 14"/></g>
                <g fill="none" stroke="#9cb8da" stroke-width=".9"><path d="M110 62l60-2 40-8M212 80l26 12 30 20 27 4M210 85l-4 40-30 40M205 250l20 30 40 14 30 10M96 0l60 4M250 0l40 6"/><path d="M234 126l6 0 2 6-6 2zM160 236l16 2-4 5-12-2zM55 120l8 0-2 6z" fill="#8fb3de"/></g>
                <path d="M27.500 91.500h241.500v137h-241.500z" fill="#3380c8" fill-opacity=".2" stroke="#2a75ba" stroke-width="1.300"/><path d="M32.500 104h78v68h-78z" fill="#3379b0" fill-opacity=".3" stroke="#2a75ba" stroke-width="1.200"/>
                <g font-family="Noto Sans, sans-serif" font-style="italic" font-weight="600" fill="#4c5560" font-size="12.500"><text x="42" y="3">Braunschweig</text><text x="1" y="35">eim</text><text x="254" y="41">Magde</text><text x="1" y="218">en</text></g>
              </svg>
              <p class="absolute right-0 bottom-0 bg-white/70 px-1 text-[8px] leading-3 text-[#333] [font-family:'Liberation_Sans',sans-serif]"><a href="#" class="text-[#0078a8]">Leaflet</a> | Copyright © Omniscale</p></div></div>
            <button class="mt-[18px] h-[31px] w-[156px] rounded-full bg-[#006ec7] pl-[5px] text-white">Kartenansicht öffnen</button>
          </div>
        </div>
      </article>

      <article class="rounded-md border-2 border-[#c9d3e8] px-6 pt-[18px] pb-4">
        <div class="flex justify-between">
          <div class="min-w-0 flex-1">
            <p class="flex h-[22px] items-center text-[13px] font-bold"><svg class="mr-[6px] size-[15px]"><use href="#i-globe"/></svg>Geodatensatz</p>
            <h2 class="slab mt-[14px] text-[17px] leading-[22px] font-bold text-[#006ec7]"><a href="#">Biotoptypenbewertung</a></h2>
          </div>
          <div class="-mt-1 -mb-1 w-[100px] shrink-0 text-[11px] leading-[14px] [&>div]:flex [&>div]:h-5 [&>div]:items-center [&>div]:justify-end [&>div]:gap-2 [&_span]:border-b [&_span]:border-dashed [&_span]:border-[#7d8fa0]"><div><span>WFS</span><span>WMS</span></div><div><span>ZIP</span><span>Shapefiles</span></div><div><span>HTML</span></div></div>
        </div>
        <p class="mt-3 leading-[21px]">GIS-Datensatz mit einer naturschutzfachlichen Bewertung der Biotoptypen im Biosphärenreservat Niedersächsische Elbtalaue.</p>
        <div class="mt-3 flex h-[25px] items-end justify-between pr-[2px]"><button class="flex items-center gap-[9px] font-bold text-[#006ec7]"><svg class="size-[21px]" viewBox="0 0 21 21"><circle cx="10.500" cy="10.500" r="10" fill="#f5f5f5" stroke="#c9d2e6"/><path d="M5 10.500h11M10.500 5v11" stroke="#006ec7" stroke-width="1.500"/></svg>Mehr Infos</button><a href="#" aria-label="Details" class="text-[#006ec7]"><svg class="size-[25px]"><use href="#i-arrow"/></svg></a></div>
      </article>

      <article class="rounded-md border-2 border-[#c9d3e8] px-6 pt-[18px] pb-4">
        <div class="flex justify-between">
          <div class="min-w-0 flex-1">
            <p class="flex h-[22px] items-center text-[13px] font-bold"><svg class="mr-[6px] size-[15px]"><use href="#i-globe"/></svg>Geodatensatz</p>
            <h2 class="slab mt-[14px] text-[17px] leading-[22px] font-bold text-[#006ec7]"><a href="#">Pflanzenartenschutz</a></h2>
          </div>
          <div class="-mt-1 -mb-1 w-[100px] shrink-0 text-[11px] leading-[14px] [&>div]:flex [&>div]:h-5 [&>div]:items-center [&>div]:justify-end [&>div]:gap-2 [&_span]:border-b [&_span]:border-dashed [&_span]:border-[#7d8fa0]"><div><span>WFS</span><span>WMS</span></div><div><span>HTML</span><span>Shapefiles</span></div><div><span>ZIP</span></div></div>
        </div>
        <p class="mt-3 leading-[21px]">GIS-Datensatz mit bedeutsamen Gebieten für den Pflanzenartenschutz im Biosphärenreservat Niedersächsische<br>Elbtalaue.</p>
        <div class="mt-3 flex h-[25px] items-end justify-between pr-[2px]"><button class="flex items-center gap-[9px] font-bold text-[#006ec7]"><svg class="size-[21px]" viewBox="0 0 21 21"><circle cx="10.500" cy="10.500" r="10" fill="#f5f5f5" stroke="#c9d2e6"/><path d="M5 10.500h11M10.500 5v11" stroke="#006ec7" stroke-width="1.500"/></svg>Mehr Infos</button><a href="#" aria-label="Details" class="text-[#006ec7]"><svg class="size-[25px]"><use href="#i-arrow"/></svg></a></div>
      </article>

      <article class="rounded-md border-2 border-[#c9d3e8] px-6 pt-[18px] pb-4">
        <div class="flex justify-between">
          <div class="min-w-0 flex-1">
            <p class="flex h-[22px] items-center text-[13px] font-bold"><svg class="mr-[6px] size-[15px]"><use href="#i-globe"/></svg>Geodatensatz<span class="ml-5 flex items-center gap-[6px] pt-[2px] text-[11px] font-normal"><svg class="size-[14px]"><use href="#i-open"/></svg>Opendata</span></p>
            <h2 class="slab mt-[14px] text-[17px] leading-[22px] font-bold text-[#006ec7]"><a href="#">Fluglärm Ln</a></h2>
          </div>
          <div class="-mt-1 -mb-1 w-[100px] shrink-0 text-[11px] leading-[14px] [&>div]:flex [&>div]:h-5 [&>div]:items-center [&>div]:justify-end [&>div]:gap-2 [&_span]:border-b [&_span]:border-dashed [&_span]:border-[#7d8fa0]"><div><span>WFS</span><span>WMS</span></div><div><span>ZIP</span><span>Shapefiles</span></div><div><span>HTML</span></div></div>
        </div>
        <p class="mt-3 leading-[21px]">Digitaler Datenbestand des Berechnungsergebnisses Ln (night) 2017 nach EU- Umgebungslärmrichtlinie (2002/49/EG, 34. BImSchV) für den Großflughafen Hannover/Langenhagen. Die Berechnung des Pegels...</p>
        <div class="mt-3 flex h-[25px] items-end justify-between pr-[2px]"><button class="flex items-center gap-[9px] font-bold text-[#006ec7]"><svg class="size-[21px]" viewBox="0 0 21 21"><circle cx="10.500" cy="10.500" r="10" fill="#f5f5f5" stroke="#c9d2e6"/><path d="M5 10.500h11M10.500 5v11" stroke="#006ec7" stroke-width="1.500"/></svg>Mehr Infos</button><a href="#" aria-label="Details" class="text-[#006ec7]"><svg class="size-[25px]"><use href="#i-arrow"/></svg></a></div>
      </article>

      <article class="rounded-md border-2 border-[#c9d3e8] px-6 pt-[18px] pb-4">
        <div class="flex justify-between">
          <div class="min-w-0 flex-1">
            <p class="flex h-[22px] items-center text-[13px] font-bold"><svg class="mr-[6px] size-[15px]"><use href="#i-globe"/></svg>Geodatensatz<span class="ml-5 flex items-center gap-[6px] pt-[2px] text-[11px] font-normal"><svg class="size-[14px]"><use href="#i-open"/></svg>Opendata</span></p>
            <h2 class="slab mt-[14px] text-[17px] leading-[22px] font-bold text-[#006ec7]"><a href="#">Ballungsraum</a></h2>
          </div>
          <div class="-mt-1 -mb-1 w-[100px] shrink-0 text-[11px] leading-[14px] [&>div]:flex [&>div]:h-5 [&>div]:items-center [&>div]:justify-end [&>div]:gap-2 [&_span]:border-b [&_span]:border-dashed [&_span]:border-[#7d8fa0]"><div><span>WFS</span><span>WMS</span></div><div><span>ZIP</span><span>Shapefiles</span></div><div><span>HTML</span></div></div>
        </div>
        <p class="mt-3 leading-[21px]">Die dargestellten Gebiete erfüllten im Rahmen der EU-Lärmkartierung Stufe 3 2017 die Kriterien eines Ballungsraums lt. § 47b BImSchG mit einer Einwohnerzahl von über 100.000 und einer...</p>
        <div class="mt-3 flex h-[25px] items-end justify-between pr-[2px]"><button class="flex items-center gap-[9px] font-bold text-[#006ec7]"><svg class="size-[21px]" viewBox="0 0 21 21"><circle cx="10.500" cy="10.500" r="10" fill="#f5f5f5" stroke="#c9d2e6"/><path d="M5 10.500h11M10.500 5v11" stroke="#006ec7" stroke-width="1.500"/></svg>Mehr Infos</button><a href="#" aria-label="Details" class="text-[#006ec7]"><svg class="size-[25px]"><use href="#i-arrow"/></svg></a></div>
      </article>

      <article class="rounded-md border-2 border-[#c9d3e8] px-6 pt-[18px] pb-4">
        <div class="flex justify-between">
          <div class="min-w-0 flex-1">
            <p class="flex h-[22px] items-center text-[13px] font-bold"><svg class="mr-[6px] size-[15px]"><use href="#i-globe"/></svg>Geodatensatz<span class="ml-5 flex items-center gap-[6px] pt-[2px] text-[11px] font-normal"><svg class="size-[14px]"><use href="#i-open"/></svg>Opendata</span></p>
            <h2 class="slab mt-[14px] text-[17px] leading-[22px] font-bold text-[#006ec7]"><a href="#">Feinstaub PM10 - Überschreitungswahrscheinlichkeit des 35-Tage-Kriteriums als Jahresmittelwert 2015</a></h2>
          </div>
          <div class="-mt-1 -mb-1 w-[100px] shrink-0 text-[11px] leading-[14px] [&>div]:flex [&>div]:h-5 [&>div]:items-center [&>div]:justify-end [&>div]:gap-2 [&_span]:border-b [&_span]:border-dashed [&_span]:border-[#7d8fa0]"><div><span>WFS</span><span>WMS</span></div><div><span>ZIP</span><span>Shapefiles</span></div><div><span>HTML</span></div></div>
        </div>
        <p class="mt-3 text-[10px] leading-4"><b>Zeitbezug der Daten</b>: 01.01.2015 Bis 31.12.2015</p>
        <p class="mt-[10px] leading-[21px]">Berechnete Feinstaub-Immissionsbelastung (µg/m³) im bebauten Straßenraum für das Bezugsjahr 2015. Die Immission wurde für den Bereich des Gehweges für eine Höhe von 1,5 m ermittelt. Gemäß der 39....</p>
        <div class="mt-3 flex h-[25px] items-end justify-between pr-[2px]"><button class="flex items-center gap-[9px] font-bold text-[#006ec7]"><svg class="size-[21px]" viewBox="0 0 21 21"><circle cx="10.500" cy="10.500" r="10" fill="#f5f5f5" stroke="#c9d2e6"/><path d="M5 10.500h11M10.500 5v11" stroke="#006ec7" stroke-width="1.500"/></svg>Mehr Infos</button><a href="#" aria-label="Details" class="text-[#006ec7]"><svg class="size-[25px]"><use href="#i-arrow"/></svg></a></div>
      </article>

      <article class="rounded-md border-2 border-[#c9d3e8] px-6 pt-[18px] pb-4">
        <div class="flex justify-between">
          <div class="min-w-0 flex-1">
            <p class="flex h-[22px] items-center text-[13px] font-bold"><svg class="mr-[6px] size-[15px]"><use href="#i-globe"/></svg>Geodatensatz<span class="ml-5 flex items-center gap-[6px] pt-[2px] text-[11px] font-normal"><svg class="size-[14px]"><use href="#i-inspire"/></svg>INSPIRE<svg class="ml-[6px] size-[14px]"><use href="#i-open"/></svg>Opendata</span></p>
            <h2 class="slab mt-[14px] text-[17px] leading-[22px] font-bold text-[#006ec7]"><a href="#">Außengrenze Harz</a></h2>
          </div>
          <div class="-mt-1 -mb-1 w-[100px] shrink-0 text-[11px] leading-[14px] [&>div]:flex [&>div]:h-5 [&>div]:items-center [&>div]:justify-end [&>div]:gap-2 [&_span]:border-b [&_span]:border-dashed [&_span]:border-[#7d8fa0]"><div><span>ZIP</span><span>WFS</span><span>WMS</span></div><div><span>HTML</span></div></div>
        </div>
        <p class="mt-3 leading-[21px]">Außengrenze des niedersächsischen Teils des Nationalparks Harz.</p>
        <div class="mt-3 flex h-[25px] items-end justify-between pr-[2px]"><button class="flex items-center gap-[9px] font-bold text-[#006ec7]"><svg class="size-[21px]" viewBox="0 0 21 21"><circle cx="10.500" cy="10.500" r="10" fill="#f5f5f5" stroke="#c9d2e6"/><path d="M5 10.500h11M10.500 5v11" stroke="#006ec7" stroke-width="1.500"/></svg>Mehr Infos</button><a href="#" aria-label="Details" class="text-[#006ec7]"><svg class="size-[25px]"><use href="#i-arrow"/></svg></a></div>
      </article>
    </div>

    <p class="slab mt-5 text-center text-[16px] leading-6 font-bold text-[#1f3666]">1 - 10 von 21795 Einträgen</p>
    <nav aria-label="Seiten" class="mt-[25px] mb-[50px] flex h-[28px] items-center justify-center pr-1 text-[14px] text-[#006ec7] [&>*]:w-[51px] [&>*]:text-center">
      <a href="#" aria-label="Erste Seite"><svg class="mx-auto size-[10px]" viewBox="0 0 10 10" fill="none" stroke="currentColor" stroke-width="1.300"><path d="M5 0L1 5l4 5M9 0L5 5l4 5"/></svg></a>
      <a href="#" aria-label="Vorherige Seite"><svg class="mx-auto size-[11px]" viewBox="0 0 11 11" fill="none" stroke="currentColor" stroke-width="1.400"><path d="M11 5.500H1M5.500 1L1 5.500 5.500 10"/></svg></a>
      <span class="text-[18px] text-[#3b576f]">1</span><a href="#">2</a><a href="#">3</a><a href="#">4</a><a href="#">5</a>
      <a href="#" aria-label="Nächste Seite"><svg class="mx-auto size-[11px]" viewBox="0 0 11 11" fill="none" stroke="currentColor" stroke-width="1.400"><path d="M0 5.500h10M5.500 1L10 5.500 5.500 10"/></svg></a>
      <a href="#" aria-label="Letzte Seite"><svg class="mx-auto size-[10px]" viewBox="0 0 10 10" fill="none" stroke="currentColor" stroke-width="1.300"><path d="M1 0l4 5-4 5M5 0l4 5-4 5"/></svg></a>
    </nav>
  </main>
</div>

<footer class="flex h-[85px] items-start justify-between border-t-2 border-[#c9d3e8] pr-[28px] pl-[9px]">
  <div class="flex pt-[19px] text-[12px] leading-4 text-[#5f7a90]"><svg class="mt-[1px] h-[31px] w-[27px]"><use href="#i-crest"/></svg><span class="ml-[6px] w-[13px]">©</span><p>Niedersächsisches Ministerium für Umwelt,<br>Energie, Bauen und Klimaschutz</p></div>
  <nav aria-label="Fußzeile" class="flex gap-[21px] pt-5 text-[12px] leading-4 font-bold text-[#006ec7]"><a href="#">HILFE</a><a href="#">KONTAKT</a><a href="#">INHALT</a><a href="#">IMPRESSUM</a><a href="#">DATENSCHUTZ</a><a href="#">BARRIEREFREIHEIT</a></nav>
</footer>
</body>
</html>
